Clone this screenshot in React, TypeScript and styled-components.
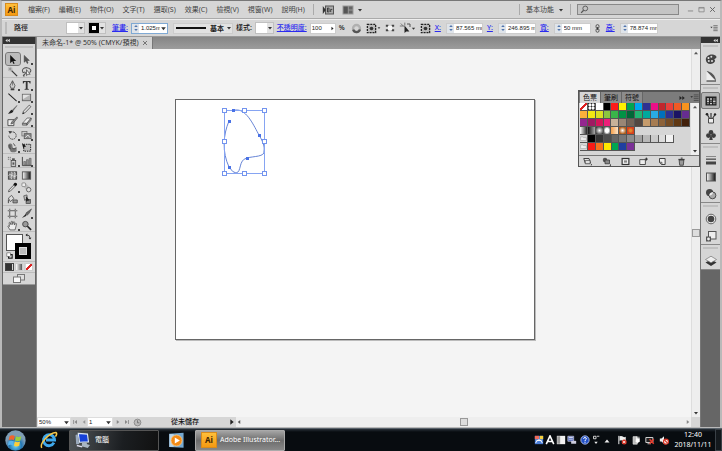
import React from "react";
import styled, { createGlobalStyle, css } from "styled-components";

const Global = createGlobalStyle`
  *, *::before, *::after { box-sizing: border-box; }
  html, body { margin: 0; padding: 0; height: 100%; overflow: hidden; }
  body, button, input, select {
    font-family: "Noto Sans", "Noto Sans CJK TC", sans-serif;
    font-size: 7px;
    line-height: 10px;
    color: #333;
  }
  button { border: 0; padding: 0; margin: 0; background: none; display: flex; align-items: center; justify-content: center; }
  input, select { border: 0; padding: 0; margin: 0; min-width: 0; outline: 0; }
  select { appearance: none; background: transparent; }
`;

/* ---------- icons, all drawn on a 12 x 12 grid ---------- */

const K = "#3c3c3c";
const L = { fill: "none", stroke: K, strokeWidth: 1 } as const;

const icons: Record<string, React.ReactNode> = {
  select: <path d="M3.5 1v9l2.2-2 1.4 3 1.2-.6-1.3-2.9h3z" fill="#111" />,
  direct: <path d="M3.5 1.5v7.5l2-1.7 1.2 3 1-.5-1.2-2.8h2.6z" fill="#555" stroke="#333" strokeWidth=".5" />,
  wand: <><path d="M5 5l6 6" stroke={K} strokeWidth="1.4" /><path d="M3.5 .8v5M1 3.3h5M1.8 1.6l3.4 3.4M5.2 1.6L1.8 5" stroke="#888" strokeWidth=".7" /></>,
  lasso: <><path d="M2.5 7.5C0 4 3 1.5 6.5 1.8S12.3 5 9.3 7.3M2.5 7.5c1.5-2 3.5 0 1.5 1.5S2 11 4 11" {...L} stroke="#555" strokeWidth="1.1" /><path d="M6 4v6.5l1.6-1.5h2.4z" fill="#eee" stroke="#444" strokeWidth=".8" /></>,
  pen: <><path d="M6 .8L3.3 6l1 3h3.4l1-3z" fill="#ccc" stroke={K} strokeWidth=".8" /><path d="M6 1v5" stroke="#555" strokeWidth=".7" /><path d="M4 9.5h4V11.2H4z" fill={K} /></>,
  type: <path d="M2 1h8.4v2.7h-.8Q9.3 2 7.2 2v7.5l1.3.4v.8H3.9v-.8l1.3-.4V2Q3 2 2.8 3.7H2z" fill="#333" />,
  line: <path d="M1.5 1.8l9 8.2" stroke="#222" strokeWidth="1.1" />,
  rect: <><rect x="1.5" y="2.5" width="9" height="7" fill="#b4b4b4" stroke="#666" /><path d="M2 3h8L2 8z" fill="#e3e3e3" /></>,
  brush: <><path d="M11 1L5.5 6.5l1.3 1L11.2 2z" fill="#666" /><path d="M5.2 6.3l1.8 1.4C6.5 10 4 10.5 1 10.6 3.2 9 3 7 5.2 6.3z" fill="#222" /></>,
  pencil: <><path d="M9 1.2l1.8 1.7L4.6 9.4l-2.8 1.3.9-2.9z" fill="#ddd" stroke={K} strokeWidth=".8" /><path d="M1.7 10.8l.6-1.8 1.2 1.1z" fill="#111" /></>,
  blob: <><path d="M1 4h6.5v6.5H1z" fill="#eee" stroke={K} strokeWidth=".9" /><path d="M11 1L5.2 6.2l-1 2.6 2.5-.9L11.5 2.2z" fill="#888" stroke={K} strokeWidth=".6" /></>,
  eraser: <><path d="M6.7 2.2h4.4L6.4 8H1.6z" fill="#eee" stroke={K} strokeWidth=".7" /><path d="M1.6 8h4.8v2H1.6zM6.4 8l4.7-5.8v2.1L6.4 10z" fill="#aaa" stroke={K} strokeWidth=".6" /></>,
  rotate: <><path d="M4 2.6a4 4 0 1 1-2 3.6" {...L} strokeDasharray="2 .7" /><path d="M1.5 1.2l3.8.2-2 3z" fill={K} /></>,
  scale: <><rect x="1" y="1.5" width="5.5" height="5" fill="#ccc" stroke="#666" strokeWidth=".8" /><rect x="3.5" y="4" width="7.5" height="5.5" fill="#888" stroke="#555" strokeWidth=".8" /><path d="M4.5 8.5l3-3 2.5 3" stroke="#eee" fill="none" /></>,
  warp: <><path d="M1 3.5c2-3 5-2 5 1s3 3 4.5 1v4.5C8 12 4 11.5 3.5 9.5S1 7 1 3.5z" fill="#777" /><path d="M2.5 3c2 2-1 3 2 5M6 7c2 1 3 0 4-1M7 1.5l2 3" stroke={K} fill="none" strokeWidth=".9" /></>,
  transform: <><rect x="3" y="2.5" width="7.5" height="7.5" fill="#bbb" stroke="#111" strokeDasharray="1.5 1" /><path d="M1 1l4.8 4-2 .3L2.5 7z" fill="#111" /></>,
  spray: <><rect x="4.5" y="5" width="5" height="6.5" fill="#ccc" stroke={K} strokeWidth=".8" /><path d="M5.5 2.5h3v2.2h-3z" fill="#555" /><path d="M1 1.5h1M3 1.5h1M1 3.5h1M3 3.5h1" stroke="#555" /><path d="M6 7h2v2.5H6z" fill="#555" /></>,
  graph: <><path d="M1.5 1v9.5H12" {...L} /><path d="M3 6h2v4H3zM6 4h2v6H6zM9 2.5h2V10H9z" fill="#999" stroke={K} strokeWidth=".5" /></>,
  mesh: <><rect x="1.5" y="2" width="9" height="8" fill="#888" stroke="#444" /><path d="M1.5 6c3-3 5 3 9 0M5 2c2 3-2 5 0 8M8 2c2 3-1 5 0 8" stroke="#eee" fill="none" strokeWidth=".8" /></>,
  gradient: <rect x="1.5" y="2" width="9" height="8" fill="url(#gr)" stroke="#555" />,
  dropper: <><path d="M8.2 1.2C9.5-.2 12 2 10.6 3.5L9.3 5 6.8 2.7z" fill="#111" /><path d="M7 3.6l1.5 1.5L3.6 10l-2 .7.6-2.1z" fill="#ddd" stroke={K} strokeWidth=".8" /></>,
  blend: <><path d="M1.5 2.5L4.5.8l6 6-4 3.5z" fill="#bbb" /><rect x="1" y="1" width="4" height="4" rx="1" fill="#eee" stroke="#777" strokeWidth=".8" /><circle cx="8.4" cy="8.4" r="2.4" fill="#ddd" stroke="#444" strokeWidth=".8" /></>,
  bucket: <><path d="M1.5 4.5L5 1.5 7.5 5 3.6 8.3z" fill="#ddd" stroke={K} strokeWidth=".8" /><path d="M6.5 6.5h4.7v3.2H6.5z" fill="#999" stroke={K} strokeWidth=".8" /><path d="M1.5 6v4" stroke={K} /></>,
  liveSelect: <><path d="M3 2l3.5-1L7 5 4 7z" fill="#bbb" stroke={K} strokeWidth=".7" /><rect x="5.5" y="6" width="5" height="4.5" fill="#888" stroke={K} strokeWidth=".7" /><path d="M5.5 2.5v6L7 7.3l2.5-.1z" fill="#222" /></>,
  artboard: <><rect x="3" y="3" width="6" height="6" fill="#ddd" stroke="#555" /><path d="M3 .8v1.5M9 .8v1.5M3 9.8v1.5M9 9.8v1.5M.8 3h1.5M.8 9h1.5M9.8 3h1.5M9.8 9h1.5" stroke="#555" /></>,
  slice: <><path d="M11.5 1L6 5 5 7l1.7 1L9 5.5z" fill="#666" stroke={K} strokeWidth=".6" /><path d="M5.2 6.5L1 11l4.6-2.3z" fill="#222" /></>,
  hand: <path d="M3.2 10.8L.9 6.8q.8-.9 1.8.3L2.3 3q.8-.9 1.4.2l.7 2L4.6 1.7q.9-.8 1.4.1l.2 3.1.9-2.8q1-.6 1.3.3l-.3 3.1 1.4-1.7q1-.2.9.7L8.8 10.8z" fill="#eee" stroke="#444" strokeWidth=".8" />,
  zoom: <><circle cx="4.8" cy="4.5" r="3" fill="#999" stroke="#444" strokeWidth="1" /><path d="M7 6.8l4 4" stroke="#222" strokeWidth="1.8" /></>,
  screen: <><rect x="4.5" y="1.5" width="7" height="5.5" fill="#ddd" stroke="#777" /><rect x=".5" y="4" width="7" height="5.5" fill="#f8f8f8" stroke="#777" /></>,
  palette: <><path d="M.8 6.5C1 2.5 5 1 8 1.5s4.5 2.7 2.7 3.8-1.5 1.2-.8 2-1 3.7-4.2 3.7S.8 9 .8 6.5z" fill="#444" /><circle cx="3.5" cy="5" r="1" fill="#eee" /><circle cx="6.3" cy="3.8" r="1" fill="#ddd" /><circle cx="3.8" cy="8" r="1" fill="#ddd" /><circle cx="7" cy="8" r=".9" fill="#eee" /></>,
  guide: <><path d="M1.5 1C6 1.5 10.5 5 11 11H1.5z" fill="#eee" /><path d="M1.5 1C6 1.5 10.5 5 11 11z" fill="#555" /><path d="M1.5 11h9.5" stroke="#222" /></>,
  swatches: <><rect x=".5" y="1.5" width="11" height="9" fill="#222" /><path d="M2 3.2h2v1.6H2zM5 3.2h2v1.6H5zM2 5.6h2v1.6H2zM8 5.6h2.5v1.6H8zM5 8h2v1.3H5z" fill="#ccc" /><path d="M8 3.2h2.5v1.6H8zM5 5.6h2v1.6H5zM2 8h2v1.3H2zM8 8h2.5v1.3H8z" fill="#777" /></>,
  brushes: <><path d="M3.5 6.5h5V11h-5z" fill="#eee" stroke={K} strokeWidth=".9" /><path d="M4.5 6.5L2 2M6 6.5V3M7.5 6.5L10 2.5" stroke={K} strokeWidth="1.2" /><circle cx="2" cy="2.2" r="1.3" fill="#222" /><circle cx="6" cy="2" r="1" fill="#555" /><circle cx="10" cy="2.4" r="1.2" fill="#222" /></>,
  club: <><circle cx="6" cy="3.3" r="2.3" fill={K} /><circle cx="3.4" cy="6.6" r="2.3" fill={K} /><circle cx="8.6" cy="6.6" r="2.3" fill={K} /><path d="M6 4.5L7.8 11H4.2z" fill={K} /></>,
  strokes: <><path d="M1 2.5h10" stroke="#888" strokeWidth="1" /><path d="M1 5.2h10" stroke="#666" strokeWidth="1.6" /><path d="M1 9h10" stroke="#444" strokeWidth="3" /></>,
  transparency: <><circle cx="4.6" cy="4.6" r="3.6" fill="#444" /><circle cx="7.5" cy="7.4" r="3.4" fill="#aaa" stroke="#333" strokeWidth=".8" /><path d="M4.2 7.8q0-3.3 3.8-3.8-.2 3.3-3.8 3.8z" fill="#eee" /></>,
  appearance: <><circle cx="6" cy="6" r="4.8" fill="#eee" stroke="#666" strokeWidth="1" /><circle cx="6" cy="6" r="3.3" fill="#444" /></>,
  styles: <><rect x="3.5" y="1.5" width="7.5" height="7.5" fill="#eee" stroke="#555" /><path d="M1 6.5h5v5H1z" fill="#555" /><circle cx="3.5" cy="9" r="1.4" fill="#eee" /></>,
  layers: <><path d="M6 4.5l5.5 3L6 11 .5 7.5z" fill="#333" /><path d="M6 1.2l5.5 3.3L6 7.8.5 4.5z" fill="#eee" stroke="#777" strokeWidth=".7" /></>,
  bridge: <><rect x="3.5" y="2" width="8" height="8" fill="#aaa" stroke="#555" /><path d="M.8 2v8l3-4z" fill="#333" /><path d="M5.5 4v4h1.2q1.2-1 0-2 1-1 0-2zM8.7 8V5.4h1.6" fill="none" stroke="#333" strokeWidth=".9" /></>,
  arrange: <><rect x=".5" y="1.5" width="11" height="9" fill="#999" /><path d="M1.5 2.5h4.3v7H1.5z" fill="#555" /><path d="M6.8 2.5h3.7v3H6.8zM6.8 6.5h3.7v3H6.8z" fill="#666" /></>,
  recolor: <><circle cx="6" cy="6" r="3.8" fill="none" stroke="#b0b0b0" strokeWidth="2.6" /><path d="M2.4 7.2A3.8 3.8 0 0 0 9.7 7" stroke="#555" strokeWidth="2.4" fill="none" /></>,
  alignBox: <><rect x="1.5" y="1.5" width="9" height="9" fill="#bbb" stroke="#222" strokeWidth="1.4" strokeDasharray="2.2 1" /><circle cx="6" cy="6" r="2" fill="#333" /></>,
  anchors: <><path d="M1 2h3v2.5H1zM8 2h3v2.5H8zM1 7.5h3V10H1zM8 7.5h3V10H8z" fill="#444" /><rect x="3.5" y="3.5" width="5" height="5" fill="#f4f4f4" /></>,
  pick: <><path d="M.8 4h4M1.8 1.5l3 3M5.8 .6v3" stroke="#777" /><path d="M5.5 3.5v7.5l1.7-1.5h3.2z" fill="#222" /><path d="M8 2h3v3" stroke="#555" fill="none" /></>,
  chain: <><rect x="4" y=".8" width="4" height="5" rx="2" {...L} stroke="#555" strokeWidth="1.3" /><rect x="4" y="6" width="4" height="5" rx="2" {...L} stroke="#555" strokeWidth="1.3" /><path d="M6 4v4" stroke="#222" /></>,
  libs: <><path d="M1 2h7l2 6H3z" fill="#eee" stroke="#333" strokeWidth="1.2" /><path d="M3 4.5h6.5V9H3z" fill="#ddd" stroke="#444" /><path d="M10 11h2V9z" fill="#222" /></>,
  kinds: <><circle cx="4" cy="4" r="3" fill="#555" /><path d="M4 4h6v5H4z" fill="#888" stroke="#333" /><path d="M10 11.5h2V9z" fill="#222" /></>,
  options: <><rect x="1.5" y="2" width="9" height="8" fill="#eee" stroke="#333" strokeWidth="1.6" /><path d="M4 4.5h4v3H4z" fill="#888" /></>,
  folderNew: <><path d="M1 3.5h7.5V10H1z" fill="#eee" stroke="#333" strokeWidth="1.1" /><path d="M9.8 .8v4M7.8 2.8h4" stroke="#222" strokeWidth="1.2" /></>,
  newItem: <><path d="M2 2h7.5v8H5L2 7.2z" fill="#eee" stroke="#333" strokeWidth="1.2" /><path d="M2 7h3.2v3.2" {...L} /></>,
  trash: <><path d="M2.8 4h6.4l-.8 7H3.6z" fill="#999" stroke="#222" strokeWidth=".9" /><path d="M1.8 3.2h8.4M5 1.5h2.5" stroke="#222" strokeWidth="1.2" /></>,
  folder: <path d="M1 3.2h4l1 1.3h5V9.5H1z" fill="#eee" stroke="#999" strokeWidth=".9" />,
  search: <><circle cx="7" cy="4.6" r="3.2" {...L} stroke="#555" strokeWidth="1.2" /><path d="M4.8 7L1.5 10.5" stroke="#555" strokeWidth="1.6" /></>,
  min: <path d="M1.5 8.5h9" stroke="#888" strokeWidth="1.6" />,
  max: <path d="M1.5 2.5h9v7.5h-9zM1.5 3.5h9" fill="none" stroke="#888" strokeWidth="1.4" />,
  close: <path d="M2 2l8 8M10 2l-8 8" stroke="#666" strokeWidth="1.7" />,
  menu: <><path d="M.5 4h3.4L2.2 6.5z" fill={K} /><path d="M5 2.5h6.5M5 5h6.5M5 7.5h6.5M5 10h6.5" stroke={K} strokeWidth=".9" /></>,
  down: <path d="M2 4h8L6 9z" fill="#333" />,
  up: <path d="M2 8.5h8L6 3.5z" fill="#555" />,
  left: <path d="M8.5 2v8l-5-4z" fill="#555" />,
  right: <path d="M3.5 2v8l5-4z" fill="#222" />,
  rightSoft: <path d="M3.5 2v8l5-4z" fill="#888" />,
  leftSoft: <path d="M8.5 2v8l-5-4z" fill="#999" />,
  first: <path d="M10 2v8L5 6zM2.5 2h1.6v8H2.5z" fill="#888" />,
  last: <path d="M2 2v8l5-4zM8 2h1.6v8H8z" fill="#888" />,
  collapseL: <path d="M6 2v8L1 6zM11.5 2v8l-5-4z" fill="#ddd" />,
  expandR: <path d="M1 2v8l5-4zM6.5 2v8l5-4z" fill="#222" />,
  stepper: <path d="M3.3 4.6L6 1.5l2.7 3.1zM3.3 7.4h5.4L6 10.5z" fill="#5275ad" />,
  clock: <><circle cx="6" cy="6" r="4.5" fill="#bbb" stroke="#888" strokeWidth="1.2" /><path d="M6 3v3.4h2.5" {...L} stroke="#666" /></>,
  swap: <><path d="M3 3.5q5.5-.5 5.5 5" fill="none" stroke="#222" strokeWidth="1.3" /><path d="M4 .8v5L.8 3.4zM6 8h5l-2.4 3.2z" fill="#222" /></>,
  defaults: <><rect x="4.5" y="4.5" width="6" height="6" fill="#fff" stroke="#111" strokeWidth="2" /><rect x="1.5" y="1.5" width="6" height="6" fill="#fff" stroke="#555" /></>,
  start: <><circle cx="6" cy="6" r="5.8" fill="url(#orb)" /><path d="M2.6 3.5q1.4-.9 3-.1l-.5 2.4q-1.5-.7-3 0z" fill="#f1642c" /><path d="M6.2 3.6q1.5.8 3.1 0l-.5 2.4q-1.5.8-3.1 0z" fill="#9bd03e" /><path d="M2 6.5q1.5-.8 3-.1l-.5 2.4q-1.4-.7-2.8 0z" fill="#57b5ee" /><path d="M5.6 6.6q1.5.8 3 0l-.5 2.4q-1.4.8-3 0z" fill="#ffce36" /></>,
  ie: <><path d="M9.3 7.8A3.7 3.7 0 1 1 9.7 6H4" fill="none" stroke="#3fa9ec" strokeWidth="1.9" /><path d="M1.2 11.2C-.5 8.5 6 1.3 10.6 1q1.2.5-.3 2.8" fill="none" stroke="#f7c74a" strokeWidth="1" /></>,
  computer: <><path d="M2.3 1l6.5.5.7 5.5-6.3.2z" fill="#1640d8" stroke="#dce6f2" strokeWidth=".8" /><path d="M5 7.5l3-.2.6 1.4 2 .5-1.6 2.1-4.3-1.2z" fill="#a9b6c3" /><path d="M.4 2.2l1.5-.7L3 8.4l-2.2.3z" fill="#9aaabd" /><path d="M1.3 9.5l3.8 1" stroke="#dde" strokeWidth="1" /></>,
  media: <><path d="M.8 1.2L11 .6v10.6L.8 10.6z" fill="#75a9d2" /><path d="M1 1.5h3v9H1z" fill="#b9d5e9" /><circle cx="6" cy="6" r="3.9" fill="#f28a16" stroke="#ffd292" strokeWidth=".5" /><path d="M4.8 3.8v4.4L8.4 6z" fill="#fff" /></>,
  ime: <><rect x="1" y="1" width="10" height="10" fill="#4c7fd7" /><path d="M1 1h5v4H1z" fill="#ef6a59" /><path d="M7 1h4v4H7z" fill="#f4d03f" /><path d="M2 9.5Q6 2 10 9.5M3 6.5h6" fill="none" stroke="#fff" strokeWidth="1.2" /></>,
  letterA: <path d="M1.5 11L6 1l4.5 10M3.3 7.8h5.4" fill="none" stroke="#fff" strokeWidth="1.9" />,
  half: <><rect x="1" y="1" width="10" height="10" fill="#f2f2f2" /><path d="M1.5 1.5H5v9H1.5z" fill="#999" /></>,
  keyboard: <><path d="M1 1.5h7v6H1z" fill="#4860b8" stroke="#dde" strokeWidth=".8" /><path d="M2 3h5M2 5h5" stroke="#fff" strokeWidth=".9" /><path d="M5 7h6v3.5H5z" fill="#ccd" /></>,
  help: <><circle cx="6" cy="6" r="5" fill="#214fc5" stroke="#cdd9f7" strokeWidth=".9" /><path d="M4.3 4.6q.2-1.7 1.8-1.6T7.6 5Q6 5.8 6 7.2M6 8v1.4" fill="none" stroke="#fff" strokeWidth="1.2" /></>,
  mini: <><path d="M3 4.5V1.5h3v3zM7 1.5h3" stroke="#eee" fill="none" strokeWidth="1" /><path d="M4 8h4L6 10.7z" fill="#eee" /></>,
  trayUp: <path d="M3 9h6L6 5.5z" fill="#eee" />,
  flag: <><path d="M2.2 1v10" stroke="#eee" strokeWidth="1.2" /><path d="M3 1.5q2.5-.8 4 .4t3.5.2v5q-2 .8-3.7-.2T3 6.8z" fill="#eee" /><circle cx="8.6" cy="8.4" r="3" fill="#d93324" /><path d="M7.2 7l2.8 2.8M10 7L7.2 9.8" stroke="#fff" /></>,
  plug: <><path d="M2.5 2h5v9h-5z" fill="#bbb" stroke="#eee" strokeWidth=".8" /><path d="M6 4h4.5v4L7.8 9.5 5.5 8z" fill="#fff" /><path d="M7 2v2M9.5 2v2" stroke="#fff" /></>,
  net: <><path d="M1 3h8.5v6H1z" fill="#222" stroke="#ddd" strokeWidth="1.1" /><path d="M3 10.5h4" stroke="#ddd" /><path d="M5.5 5l5 5.5M10.5 5l-5 5.5" stroke="#e53b2c" strokeWidth="1.7" /></>,
  sound: <><path d="M1 4.3h2L6 1.5v9L3 7.7H1z" fill="#f0f0f0" /><circle cx="8.4" cy="8" r="3" fill="#f2f2f2" stroke="#d93324" strokeWidth="1.4" /><path d="M6.5 6l3.8 3.8" stroke="#d93324" strokeWidth="1.3" /></>,
};

const Svg = styled.svg<{ $s: number }>`
  width: ${(p) => p.$s}px;
  height: ${(p) => p.$s}px;
  flex: none;
  display: block;
`;

const Icon = ({ name, size = 12 }: { name: string; size?: number }) => (
  <Svg $s={size} viewBox="0 0 12 12" aria-hidden="true">
    {(name === "gradient" || name === "start") && (
      <defs>
        <linearGradient id="gr"><stop offset="0" stopColor="#fff" /><stop offset="1" stopColor="#111" /></linearGradient>
        <radialGradient id="orb" cy=".75"><stop offset="0" stopColor="#6fd8f7" /><stop offset=".6" stopColor="#2678b4" /><stop offset="1" stopColor="#7e9cb4" /></radialGradient>
      </defs>
    )}
    {icons[name]}
  </Svg>
);

/* ---------- window frame ---------- */

const Desktop = styled.div`
  height: 100vh;
  display: flex;
  flex-direction: column;
  background: #0a0e12;
`;

const AppWindow = styled.div`
  flex: 1;
  min-height: 0;
  display: flex;
  flex-direction: column;
  background: #d6d6d6;
  border: solid #b9b9b9;
  border-width: 1px 2px 1px 2px;
  border-top-color: #777;
`;

const MenuBar = styled.header`
  height: 18px;
  flex: none;
  display: flex;
  align-items: center;
  padding: 0 4px 0 3px;
  border-bottom: 1px solid #aaa;
`;

const AiLogo = styled.span<{ $s: number }>`
  width: ${(p) => p.$s}px;
  height: ${(p) => p.$s}px;
  flex: none;
  display: flex;
  align-items: center;
  justify-content: center;
  border: 1px solid #d98c1c;
  background: linear-gradient(#ffbf3a, #f59a12);
  color: #3f2503;
  font: bold 8px/10px "Noto Sans", sans-serif;
`;

const Menus = styled.nav`
  display: flex;
  gap: 9px;
  margin: 0 2px 0 10px;
`;

const MenuButton = styled.button`
  color: #444;
  white-space: nowrap;
`;

const Divider = styled.span`
  width: 1px;
  height: 11px;
  flex: none;
  background: #aaa;
  margin: 0 6px;
`;

const Spacer = styled.span`
  flex: 1;
`;

const IconRow = styled.div<{ $gap?: number; $ml?: number }>`
  display: flex;
  align-items: center;
  gap: ${(p) => p.$gap ?? 0}px;
  margin-left: ${(p) => p.$ml ?? 0}px;
`;

const SearchBox = styled.label`
  width: 102px;
  height: 11px;
  display: flex;
  align-items: center;
  padding-left: 2px;
  background: #c4c4c4;
  border: 1px solid #888;
  input { flex: 1; background: transparent; height: 8px; }
`;

/* ---------- control bar ---------- */

const ControlBar = styled.div`
  height: 18px;
  flex: none;
  display: flex;
  align-items: center;
  padding: 0 2px 0 3px;
  border-top: 1px solid #eee;
  border-bottom: 1px solid #999;
  white-space: nowrap;
`;

const Grip = styled.span`
  width: 2px;
  height: 12px;
  margin-right: 7px;
  background: #bbb;
`;

const Caption = styled.span<{ $w?: number }>`
  color: #111;
  font-weight: 500;
  width: ${(p) => (p.$w ? p.$w + "px" : "auto")};
`;

const BlueLink = styled.a<{ $coord?: boolean }>`
  color: #2a2af0;
  font-weight: 500;
  text-decoration: underline;
  text-underline-offset: 1px;
  margin: ${(p) => (p.$coord ? "0 5px 0 4px" : "0 3px 0 0")};
`;

const Chip = styled.button<{ $stroke?: boolean }>`
  height: 12px;
  border: 1px solid #c0c0c0;
  margin-right: 3px;
  background: #e2e2e2;
  &::before {
    content: "";
    width: 11px;
    height: 10px;
    background: #fff;
    ${(p) => p.$stroke && css`border: 3px solid #000; width: 10px;`}
  }
`;

const Field = styled.label<{ $w: number; $focus?: boolean }>`
  width: ${(p) => p.$w}px;
  height: 11px;
  flex: none;
  display: flex;
  align-items: center;
  background: linear-gradient(90deg, #dfe4ea 7px, #fff 7px);
  border: 1px solid ${(p) => (p.$focus ? "#7fa9d4" : "#ccc")};
  input, select {
    flex: 1;
    height: 9px;
    width: 0;
    background: transparent;
    font: 6px/9px "Liberation Sans", "Noto Sans CJK TC", sans-serif;
    color: #222;
    padding-left: 1px;
  }
`;

const PlainField = styled(Field)`
  background: #fff;
`;

const StrokeSelect = styled(Field)`
  background: #e2e2e2;
  &::before {
    content: "";
    width: 30px;
    height: 2px;
    margin: 0 3px 0 2px;
    background: #111;
  }
  select { font-size: 7px; font-weight: bold; }
`;

/* ---------- workspace ---------- */

const Workspace = styled.main`
  flex: 1;
  min-height: 0;
  display: flex;
  background: #666;
`;

const DockHead = styled.div<{ $right?: boolean }>`
  height: ${(p) => (p.$right ? 6 : 7)}px;
  flex: none;
  display: flex;
  align-items: center;
  justify-content: ${(p) => (p.$right ? "flex-end" : "flex-start")};
  padding: 0 2px;
  background: #333;
`;

const ToolColumn = styled.aside`
  width: 35px;
  flex: none;
  padding: 0 1px;
  background: #666;
  border-right: 1px solid #888;
`;

const DockColumn = styled.aside`
  width: 20px;
  flex: none;
  border-left: 1px solid #777;
`;

const GripBar = styled.div<{ $tall?: boolean }>`
  height: ${(p) => (p.$tall ? 8 : 7)}px;
  padding: 2px;
  background: #d6d6d6;
  &::before {
    content: "";
    display: block;
    height: 2px;
    background: #c0c0c0;
  }
`;

const ToolGroup = styled.div`
  display: grid;
  grid-template-columns: 1fr 1fr;
  grid-auto-rows: 12px;
  padding: 1px 2px 0 3px;
  background: #d6d6d6;
  border-bottom: 1px solid #bdbdbd;
`;

const ToolButton = styled.button<{ $on?: boolean; $fly?: boolean }>`
  position: relative;
  ${(p) => p.$on && css`background: #bbb; outline: 1px solid #777; border-radius: 2px;`}
  ${(p) => p.$fly && css`
    &::after {
      content: "";
      position: absolute;
      right: 0;
      bottom: 0;
      width: 2px;
      height: 2px;
      background: #444;
    }
  `}
`;

const PaintBox = styled.div`
  position: relative;
  height: 30px;
  background: #d6d6d6;
  border-bottom: 1px solid #bdbdbd;
`;

const PaintButton = styled.button<{ $x: number; $y: number; $kind: "fill" | "stroke" | "icon" }>`
  position: absolute;
  left: ${(p) => p.$x}px;
  top: ${(p) => p.$y}px;
  ${(p) => p.$kind === "fill" && css`width: 17px; height: 17px; background: #fff; border: 1px solid #555;`}
  ${(p) => p.$kind === "stroke" && css`
    width: 16px;
    height: 16px;
    background: #bbb;
    border: 4px solid #000;
    box-shadow: inset 0 0 0 1px #ddd;
  `}
`;

const PaintModes = styled.div`
  display: flex;
  gap: 1px;
  padding: 1px 2px;
  height: 11px;
  background: #d6d6d6;
  border-bottom: 1px solid #bdbdbd;
`;

const Mode = styled.button<{ $bg: string; $on?: boolean }>`
  flex: 1;
  border: 1px solid ${(p) => (p.$on ? "#444" : "#ccc")};
  &::before {
    content: "";
    width: 6px;
    height: 6px;
    background: ${(p) => p.$bg};
  }
`;

const ScreenMode = styled.button`
  width: 100%;
  height: 12px;
  background: #d6d6d6;
  border-bottom: 1px solid #999;
`;

const DockGroup = styled.div`
  background: #d6d6d6;
  border-bottom: 1px solid #888;
`;

const DockButton = styled.button<{ $on?: boolean }>`
  width: 100%;
  height: 17px;
  ${(p) => p.$on && css`background: #b4b4b4; border: 1px solid #777; border-radius: 2px;`}
`;

const Center = styled.section`
  flex: 1;
  min-width: 0;
  display: flex;
  flex-direction: column;
  position: relative;
`;

const TabStrip = styled.div`
  height: 12px;
  flex: none;
  display: flex;
  background: linear-gradient(#858585, #9c9c9c);
`;

const DocTab = styled.button`
  gap: 3px;
  padding: 0 4px 0 5px;
  background: #d2d2d2;
  border-right: 1px solid #777;
  white-space: nowrap;
`;

const CanvasRow = styled.div`
  flex: 1;
  min-height: 0;
  display: flex;
`;

const Canvas = styled.div`
  flex: 1;
  position: relative;
  overflow: hidden;
  background: #f4f4f4;
`;

const Artboard = styled.div`
  position: absolute;
  left: 138px;
  top: 50px;
  width: 360px;
  height: 241px;
  background: #fff;
  border: 1px solid #666;
  box-shadow: 1px 1px 0 #bbb;
`;

const Drawing = styled.svg`
  position: absolute;
  left: 44px;
  top: 6px;
  width: 48px;
  height: 72px;
`;

const Track = styled.div<{ $row?: boolean }>`
  ${(p) => (p.$row ? css`flex: 1; height: 10px; flex-direction: row;` : css`width: 9px; flex: none; flex-direction: column; padding: 1px 0; border-left: 1px solid #ddd;`)}
  display: flex;
  align-items: center;
  background: #eee;
`;

const Thumb = styled.button`
  width: 8px;
  height: 8px;
  flex: none;
  background: #ddd;
  border: 1px solid #999;
`;

const StatusBar = styled.footer`
  height: 10px;
  flex: none;
  display: flex;
  align-items: center;
  background: #d6d6d6;
`;

const StatusField = styled(PlainField)`
  height: 10px;
  border-color: #ddd;
`;

const StatusMenu = styled.button`
  width: 86px;
  height: 10px;
  color: #111;
  font-weight: 500;
`;

/* ---------- swatches panel ---------- */

const Panel = styled.section`
  position: absolute;
  right: 0;
  top: 53px;
  width: 122px;
  background: #d6d6d6;
  border: 1px solid #555;
  border-top-width: 2px;
`;

const PanelTabs = styled.div`
  height: 11px;
  display: flex;
  align-items: stretch;
  padding-left: 1px;
  background: #7c7c7c;
`;

const PanelTab = styled.button<{ $on?: boolean }>`
  width: 21px;
  color: #111;
  background: ${(p) => (p.$on ? "#d6d6d6" : "#8c8c8c")};
  border-right: 1px solid #666;
`;

const PanelBody = styled.div`
  display: flex;
  height: 53px;
  border-bottom: 1px solid #777;
`;

const SwatchList = styled.div`
  flex: 1;
  padding-left: 1px;
`;

const SwatchRow = styled.div`
  display: grid;
  grid-template-columns: repeat(14, 1fr);
  height: 8px;
`;

const Swatch = styled.button<{ $bg: string }>`
  background: ${(p) => p.$bg};
  border: solid #555;
  border-width: 0 1px 1px 0;
`;

const PanelFoot = styled.div`
  height: 10px;
  display: flex;
  align-items: center;
  justify-content: space-between;
  padding: 0 13px 0 4px;
`;

/* ---------- taskbar ---------- */

const Taskbar = styled.footer`
  height: 23px;
  flex: none;
  display: flex;
  align-items: center;
  padding-left: 4px;
  background: linear-gradient(#283038, #080c10 3px);
  border-top: 1px solid #59626a;
`;

const TaskButton = styled.button<{ $on?: boolean }>`
  width: 90px;
  height: 21px;
  justify-content: flex-start;
  gap: 3px;
  padding-left: 5px;
  color: #fff;
  white-space: nowrap;
  border: 1px solid ${(p) => (p.$on ? "#aaa" : "#555")};
  border-radius: 1px;
  background: ${(p) => (p.$on ? "linear-gradient(#a4a4a4, #6c6c6c 50%, #888)" : "linear-gradient(100deg, #505558, #1b1e21 60%, #111)")};
`;

const Launcher = styled.button`
  width: 22px;
  height: 22px;
`;

const Tray = styled.div`
  display: flex;
  align-items: center;
  button { width: 11px; height: 14px; }
`;

const TrayGroup = styled.div<{ $gap: number; $mr?: number }>`
  display: flex;
  gap: ${(p) => p.$gap}px;
  margin-right: ${(p) => p.$mr ?? 4}px;
`;

const Clock = styled.time`
  width: 40px;
  margin-right: 2px;
  color: #fff;
  font-size: 7px;
  line-height: 10px;
  text-align: center;
`;

const ShowDesktop = styled.span`
  width: 7px;
  height: 22px;
  border: 1px solid #3a4147;
  background: #14191d;
`;

/* ---------- data ---------- */

const menus = ["檔案(F)", "編輯(E)", "物件(O)", "文字(T)", "選取(S)", "效果(C)", "檢視(V)", "視窗(W)", "說明(H)"];

const toolGroups: [string, boolean][][] = [
  [["select", false], ["direct", true], ["wand", false], ["lasso", false]],
  [["pen", true], ["type", true], ["line", true], ["rect", true], ["brush", false], ["pencil", true], ["blob", false], ["eraser", true]],
  [["rotate", true], ["scale", true], ["warp", true], ["transform", false]],
  [["spray", true], ["graph", true]],
  [["mesh", false], ["gradient", false], ["dropper", true], ["blend", false], ["bucket", false], ["liveSelect", false]],
  [["artboard", false], ["slice", true], ["hand", true], ["zoom", false]],
];

const dockGroups = [
  ["palette", "guide"],
  ["swatches", "brushes", "club"],
  ["strokes", "gradient", "transparency"],
  ["appearance", "styles"],
  ["layers"],
];

const none = "linear-gradient(to bottom right, #fff 40%, #d22 40% 60%, #fff 60%)";

const swatchRows: string[][] = [
  [none, "repeating-linear-gradient(90deg, #2228 0 1px, #fff8 1px 3px), repeating-linear-gradient(#333 0 1px, #fff 1px 3px)", "#fff", "#000", "#ff1a1a", "#fff200", "#00a651", "#00a8f0", "#2e3192", "#ec1088", "#c1272d", "#e8403c", "#f15a24", "#f7931e"],
  ["#fbb03b", "#f2e713", "#d9e021", "#8cc63f", "#39b54a", "#009245", "#006837", "#22b573", "#00a99d", "#29abe2", "#0071bc", "#2e3192", "#1b1464", "#662d91"],
  ["#93278f", "#9e1a62", "#d4145a", "#ed1e79", "#c7b299", "#998675", "#736357", "#534741", "#c69c6d", "#a67c52", "#8c6239", "#754c24", "#603813", "#42210b"],
  ["linear-gradient(90deg,#fff,#222)", "linear-gradient(90deg,#111,#aaa)", "radial-gradient(#fff,#222)", "radial-gradient(#fff 40%,#333)", "linear-gradient(90deg,#f5a04c,#fbe3c8)", "radial-gradient(#fff,#b4611c 70%)", "radial-gradient(#e08a2c 1px,#d8401c 3px)"],
  ["folder", "#000", "#333", "#4d4d4d", "#666", "#777", "#8c8c8c", "#a0a0a0", "#b8b8b8", "#cacaca", "#dcdcdc", "#f2f2f2"],
  ["folder", "#f71a17", "#f7701d", "#ffe600", "#00a651", "#1f3fa0", "#7b3097"],
];

const handles = [[4, 4], [24, 4], [44, 4], [4, 35], [44, 35], [4, 67], [24, 67], [44, 67]];
const anchors = [[13, 4], [9, 15], [39, 29], [27, 52], [9, 61]];

function Stepper({ label, value, width, focus }: { label: string; value: string; width: number; focus?: boolean }) {
  return (
    <Field $w={width} $focus={focus}>
      <Icon name="stepper" size={8} />
      <input aria-label={label} defaultValue={value} />
      {focus && <Icon name="down" size={7} />}
    </Field>
  );
}

export default function App() {
  return (
    <Desktop>
      <Global />
      <AppWindow>
        <MenuBar>
          <AiLogo $s={13}>Ai</AiLogo>
          <Menus>
            {menus.map((m) => <MenuButton key={m}>{m}</MenuButton>)}
          </Menus>
          <Divider />
          <IconRow $gap={8} $ml={2}>
            <button aria-label="Bridge"><Icon name="bridge" /></button>
            <IconRow $gap={3}>
              <button aria-label="排列文件"><Icon name="arrange" /></button>
              <Icon name="down" size={6} />
            </IconRow>
          </IconRow>
          <Spacer />
          <Divider />
          <MenuButton>基本功能</MenuButton>
          <IconRow $ml={4}><Icon name="down" size={6} /></IconRow>
          <Divider />
          <SearchBox>
            <Icon name="search" size={9} />
            <input type="search" aria-label="搜尋" />
          </SearchBox>
          <IconRow $gap={4} $ml={8}>
            <button aria-label="最小化"><Icon name="min" size={7} /></button>
            <button aria-label="最大化"><Icon name="max" size={7} /></button>
            <button aria-label="關閉"><Icon name="close" size={7} /></button>
          </IconRow>
        </MenuBar>

        <ControlBar>
          <Grip />
          <Caption $w={52}>路徑</Caption>
          <Chip aria-label="填色"><Icon name="down" size={6} /></Chip>
          <Chip $stroke aria-label="筆畫顏色"><Icon name="down" size={6} /></Chip>
          <IconRow $ml={3}><BlueLink href="#stroke">筆畫:</BlueLink></IconRow>
          <Stepper label="筆畫" value="1.025mm" width={37} focus />
          <IconRow $ml={5}>
            <StrokeSelect $w={60}>
              <select aria-label="筆刷"><option>基本</option></select>
              <Icon name="down" size={6} />
            </StrokeSelect>
          </IconRow>
          <IconRow $ml={3} $gap={3}>
            <Caption>樣式:</Caption>
            <Chip aria-label="樣式"><Icon name="down" size={6} /></Chip>
          </IconRow>
          <BlueLink href="#opacity">不透明度:</BlueLink>
          <PlainField $w={26}>
            <input aria-label="不透明度" defaultValue="100" />
            <Icon name="right" size={5} />
          </PlainField>
          <IconRow $ml={3}><Caption>%</Caption></IconRow>
          <IconRow $ml={6} $gap={4}>
            <button aria-label="重新上色"><Icon name="recolor" size={11} /></button>
            <button aria-label="對齊"><Icon name="alignBox" size={11} /><Icon name="down" size={4} /></button>
            <button aria-label="錨點"><Icon name="anchors" size={10} /></button>
            <button aria-label="選取類似"><Icon name="pick" /><Icon name="down" size={5} /></button>
            <button aria-label="參考點"><Icon name="alignBox" size={11} /></button>
          </IconRow>
          <BlueLink $coord href="#x">X:</BlueLink>
          <Stepper label="X" value="87.565 mm" width={37} />
          <BlueLink $coord href="#y">Y:</BlueLink>
          <Stepper label="Y" value="246.895 mm" width={38} />
          <BlueLink $coord href="#w">寬:</BlueLink>
          <Stepper label="寬" value="50 mm" width={37} />
          <IconRow $ml={2}><Icon name="chain" size={9} /></IconRow>
          <BlueLink $coord href="#h">高:</BlueLink>
          <Stepper label="高" value="78.874 mm" width={38} />
          <Spacer />
          <button aria-label="選單"><Icon name="menu" size={8} /></button>
        </ControlBar>

        <Workspace>
          <ToolColumn>
            <DockHead><Icon name="collapseL" size={5} /></DockHead>
            <GripBar $tall />
            {toolGroups.map((g, i) => (
              <ToolGroup key={i}>
                {g.map(([n, fly]) => (
                  <ToolButton key={n} aria-label={n} $on={n === "select"} $fly={fly}>
                    <Icon name={n} size={11} />
                  </ToolButton>
                ))}
              </ToolGroup>
            ))}
            <PaintBox>
              <PaintButton $kind="fill" $x={3} $y={2} aria-label="填色" />
              <PaintButton $kind="stroke" $x={12} $y={11} aria-label="筆畫" />
              <PaintButton $kind="icon" $x={22} $y={1} aria-label="切換"><Icon name="swap" size={7} /></PaintButton>
              <PaintButton $kind="icon" $x={3} $y={20} aria-label="預設"><Icon name="defaults" size={7} /></PaintButton>
            </PaintBox>
            <PaintModes>
              <Mode $bg="#333" $on aria-label="顏色" />
              <Mode $bg="linear-gradient(90deg,#fff,#555)" aria-label="漸層" />
              <Mode $bg={none} aria-label="無" />
            </PaintModes>
            <ScreenMode aria-label="螢幕模式"><Icon name="screen" /></ScreenMode>
          </ToolColumn>

          <Center>
            <TabStrip>
              <DocTab>未命名-1* @ 50% (CMYK/預視) <Icon name="close" size={6} /></DocTab>
            </TabStrip>
            <CanvasRow>
              <Canvas>
                <Artboard>
                  <Drawing viewBox="0 0 48 72">
                    <path d="M9 15C3 29 2 46 9 61Q13 67 16 67C22 66 18 54 27 52C34 50 45 51 44 45C45 40 42 34 39 29C34 20 27 4 17 4L12 4" fill="none" stroke="#6684d6" />
                    <rect x="4.5" y="4.5" width="40" height="63" fill="none" stroke="#86a4f2" />
                    {handles.map(([x, y], i) => <rect key={i} x={x - 1.5} y={y - 1.5} width="4" height="4" fill="#fff" stroke="#7394ee" />)}
                    {anchors.map(([x, y], i) => <rect key={i} x={x - 1} y={y - 1} width="3" height="3" fill="#4a72e6" />)}
                  </Drawing>
                </Artboard>
              </Canvas>
              <Track>
                <Icon name="up" size={6} />
                <Spacer />
                <Thumb aria-label="垂直捲動" />
                <Spacer />
                <Icon name="down" size={6} />
              </Track>
            </CanvasRow>
            <StatusBar>
              <StatusField $w={34}>
                <select aria-label="縮放"><option>50%</option></select>
                <Icon name="down" size={7} />
              </StatusField>
              <IconRow $gap={3} $ml={1}>
                <button aria-label="第一頁"><Icon name="first" size={6} /></button>
                <button aria-label="上一頁"><Icon name="leftSoft" size={6} /></button>
              </IconRow>
              <StatusField $w={26}>
                <select aria-label="工作區域"><option>1</option></select>
                <Icon name="down" size={7} />
              </StatusField>
              <IconRow $gap={3} $ml={2}>
                <button aria-label="下一頁"><Icon name="rightSoft" size={6} /></button>
                <button aria-label="最後一頁"><Icon name="last" size={6} /></button>
                <Icon name="clock" size={9} />
              </IconRow>
              <StatusMenu>從未儲存</StatusMenu>
              <Icon name="right" size={8} />
              <Track $row>
                <Icon name="left" size={6} />
                <Spacer />
                <Thumb aria-label="水平捲動" />
                <Spacer />
                <Icon name="rightSoft" size={6} />
              </Track>
              <IconRow $ml={9} />
            </StatusBar>

            <Panel>
              <PanelTabs>
                <PanelTab $on>色票</PanelTab>
                <PanelTab>筆刷</PanelTab>
                <PanelTab>符號</PanelTab>
                <Spacer />
                <IconRow $gap={5}>
                  <Icon name="expandR" size={6} />
                  <Icon name="menu" size={9} />
                </IconRow>
              </PanelTabs>
              <PanelBody>
                <SwatchList>
                  {swatchRows.map((row, i) => (
                    <SwatchRow key={i}>
                      {row.map((c, j) => c === "folder"
                        ? <Swatch key={j} $bg="#d6d6d6" aria-label="色彩群組"><Icon name="folder" size={7} /></Swatch>
                        : <Swatch key={j} $bg={c} aria-label="色票" />)}
                    </SwatchRow>
                  ))}
                </SwatchList>
                <Track>
                  <Icon name="up" size={6} />
                  <Spacer />
                  <Icon name="down" size={6} />
                </Track>
              </PanelBody>
              <PanelFoot>
                {["libs", "kinds", "options", "folderNew", "newItem", "trash"].map((n) => (
                  <button key={n} aria-label={n}><Icon name={n} size={9} /></button>
                ))}
              </PanelFoot>
            </Panel>
          </Center>

          <DockColumn>
            <DockHead $right><Icon name="collapseL" size={5} /></DockHead>
            {dockGroups.map((g, i) => (
              <DockGroup key={i}>
                <GripBar />
                {g.map((n) => <DockButton key={n} aria-label={n} $on={n === "swatches"}><Icon name={n} size={12} /></DockButton>)}
              </DockGroup>
            ))}
          </DockColumn>
        </Workspace>
      </AppWindow>

      <Taskbar>
        <Launcher aria-label="開始"><Icon name="start" size={21} /></Launcher>
        <IconRow $ml={12}><Launcher aria-label="Internet Explorer"><Icon name="ie" size={18} /></Launcher></IconRow>
        <IconRow $ml={9}><TaskButton><Icon name="computer" size={17} />電腦</TaskButton></IconRow>
        <IconRow $ml={6}><Launcher aria-label="媒體播放程式"><Icon name="media" size={17} /></Launcher></IconRow>
        <IconRow $ml={8}><TaskButton $on><AiLogo $s={16}>Ai</AiLogo>Adobe Illustrator...</TaskButton></IconRow>
        <Spacer />
        <Tray>
          <TrayGroup $gap={0} $mr={2}>
            {["ime", "letterA", "half", "keyboard"].map((n) => <button key={n} aria-label={n}><Icon name={n} size={10} /></button>)}
          </TrayGroup>
          <TrayGroup $gap={0}>
            {["help", "mini", "trayUp"].map((n) => <button key={n} aria-label={n}><Icon name={n} size={10} /></button>)}
          </TrayGroup>
          <TrayGroup $gap={3}>
            {["flag", "plug", "net", "sound"].map((n) => <button key={n} aria-label={n}><Icon name={n} size={10} /></button>)}
          </TrayGroup>
          <Clock>12:40<br />2018/11/11</Clock>
          <ShowDesktop />
        </Tray>
      </Taskbar>
    </Desktop>
  );
}
